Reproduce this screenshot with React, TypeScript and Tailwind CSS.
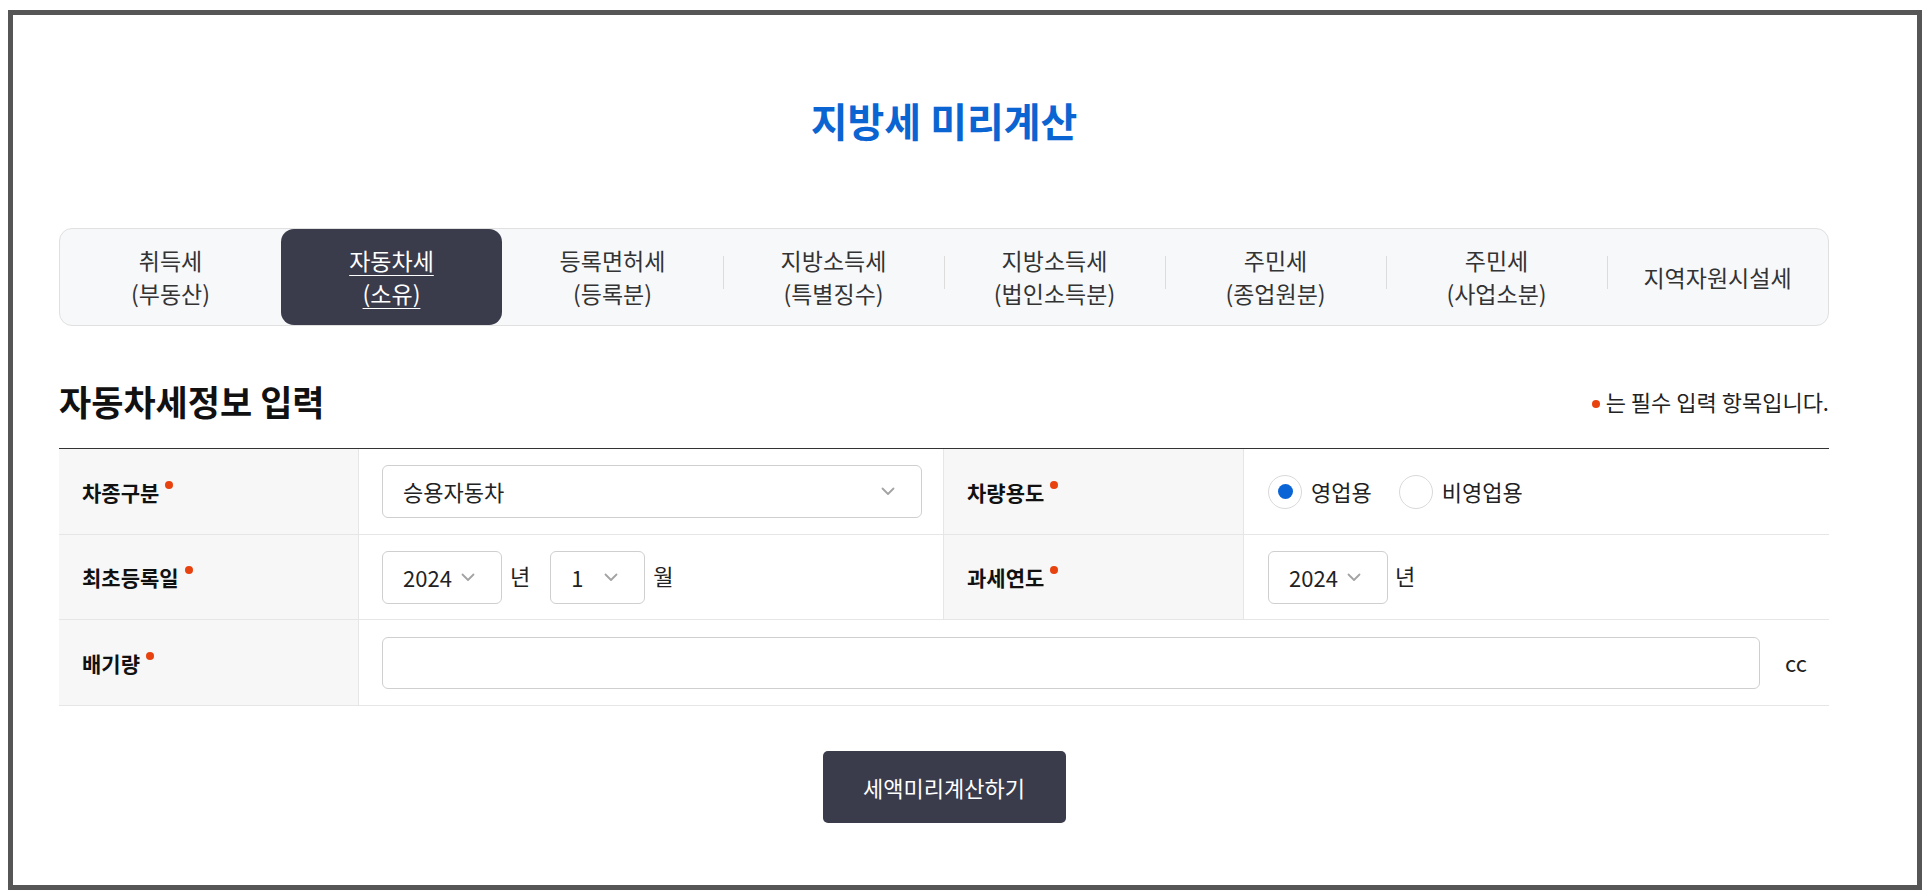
import React from "react";

const TABS: { top: string; bottom?: string }[] = [
  { top: "취득세", bottom: "(부동산)" },
  { top: "자동차세", bottom: "(소유)" },
  { top: "등록면허세", bottom: "(등록분)" },
  { top: "지방소득세", bottom: "(특별징수)" },
  { top: "지방소득세", bottom: "(법인소득분)" },
  { top: "주민세", bottom: "(종업원분)" },
  { top: "주민세", bottom: "(사업소분)" },
  { top: "지역자원시설세" },
];

const ACTIVE = 1;

function Chevron() {
  return (
    <svg width="14" height="9" viewBox="0 0 14 9" fill="none" className="shrink-0">
      <path d="M1.5 1.5L7 7L12.5 1.5" stroke="#a3a3a3" strokeWidth="1.8" strokeLinecap="round" strokeLinejoin="round" />
    </svg>
  );
}

function Required() {
  return <span className="ml-[6px] inline-block h-[8px] w-[8px] self-start mt-[3px] rounded-full bg-[#e8420f]" />;
}

function Label({ children }: { children: React.ReactNode }) {
  return (
    <div className="flex w-[300px] shrink-0 items-center border-r border-[#e6e6e6] bg-[#f7f7f7] pl-[23px]">
      <span className="flex items-start text-[21px] font-bold leading-[28px] text-[#111]">
        {children}
        <Required />
      </span>
    </div>
  );
}

function SelectBox({ value, width }: { value: string; width: string }) {
  return (
    <div
      className={`flex h-[53px] ${width} items-center justify-between rounded-[6px] border border-[#cfcfcf] bg-white pl-[20px] pr-[26px]`}
    >
      <span className="text-[22px] text-[#222]">{value}</span>
      <Chevron />
    </div>
  );
}

function Radio({ label, checked }: { label: string; checked?: boolean }) {
  return (
    <label className="flex items-center gap-[9px]">
      <span className="flex h-[34px] w-[34px] items-center justify-center rounded-full border-[1.5px] border-[#d9d9d9] bg-white">
        {checked && <span className="h-[15px] w-[15px] rounded-full bg-[#0a64d6]" />}
      </span>
      <span className="text-[22px] text-[#222]">{label}</span>
    </label>
  );
}

export default function App() {
  return (
    <div className="min-h-screen bg-white pl-[8px] pt-[10px] font-['Noto_Sans_CJK_KR','Noto_Sans',sans-serif]">
      <div className="h-[880px] w-[1914px] border-[5px] border-[#565656] pl-[46px]">
        <div className="w-[1770px]">
          {/* Title */}
          <h1 className="mt-[75px] text-center text-[40px] font-bold leading-[60px] text-[#0a64d2]">
            지방세 미리계산
          </h1>

          {/* Tabs */}
          <div className="mt-[78px] flex h-[98px] rounded-[13px] border border-[#e0e0e0] bg-[#f7f8fa]">
            {TABS.map((tab, i) => {
              const active = i === ACTIVE;
              const divider = i > 0 && i !== ACTIVE && i - 1 !== ACTIVE;
              return (
                <div
                  key={i}
                  className={`relative flex flex-1 items-center justify-center text-center text-[23px] leading-[33px] ${
                    active ? "rounded-[13px] bg-[#3a3b4b] text-white" : "text-[#333]"
                  }`}
                >
                  {divider && (
                    <span className="absolute left-0 top-[27px] h-[33px] w-px bg-[#dcdcdc]" />
                  )}
                  <span className={active ? "underline underline-offset-[5px] decoration-1" : ""}>
                    {tab.top}
                    {tab.bottom && (
                      <>
                        <br />
                        {tab.bottom}
                      </>
                    )}
                  </span>
                </div>
              );
            })}
          </div>

          {/* Section heading */}
          <div className="mt-[55px] flex h-[40px] items-center justify-between">
            <h2 className="text-[35px] font-bold leading-[40px] text-[#111]">자동차세정보 입력</h2>
            <p className="flex items-center text-[22px] text-[#222]">
              <span className="mr-[6px] mt-[6px] inline-block h-[8px] w-[8px] rounded-full bg-[#e8420f]" />
              는 필수 입력 항목입니다.
            </p>
          </div>

          {/* Form table */}
          <div className="mt-[27px] border-t border-[#333]">
            <div className="flex h-[86px] border-b border-[#e6e6e6]">
              <Label>차종구분</Label>
              <div className="flex w-[585px] shrink-0 items-center border-r border-[#e6e6e6] pl-[23px] pr-[21px]">
                <div className="flex-1">
                  <SelectBox value="승용자동차" width="w-full" />
                </div>
              </div>
              <Label>차량용도</Label>
              <div className="flex flex-1 items-center gap-[27px] pl-[24px]">
                <Radio label="영업용" checked />
                <Radio label="비영업용" />
              </div>
            </div>

            <div className="flex h-[85px] border-b border-[#e6e6e6]">
              <Label>최초등록일</Label>
              <div className="flex w-[585px] shrink-0 items-center border-r border-[#e6e6e6] pl-[23px]">
                <SelectBox value="2024" width="w-[120px]" />
                <span className="ml-[8px] mb-[4px] text-[22px] text-[#222]">년</span>
                <div className="ml-[20px]">
                  <SelectBox value="1" width="w-[95px]" />
                </div>
                <span className="ml-[8px] mb-[4px] text-[22px] text-[#222]">월</span>
              </div>
              <Label>과세연도</Label>
              <div className="flex flex-1 items-center pl-[24px]">
                <SelectBox value="2024" width="w-[120px]" />
                <span className="ml-[7px] mb-[4px] text-[22px] text-[#222]">년</span>
              </div>
            </div>

            <div className="flex h-[86px] border-b border-[#e6e6e6]">
              <Label>배기량</Label>
              <div className="flex flex-1 items-center pl-[23px] pr-[22px]">
                <input
                  type="text"
                  className="h-[52px] flex-1 rounded-[6px] border border-[#cfcfcf] bg-white px-[20px] text-[22px] outline-none"
                />
                <span className="ml-[25px] text-[22px] text-[#222]">cc</span>
              </div>
            </div>
          </div>

          {/* Submit */}
          <div className="mt-[45px] flex justify-center">
            <button className="h-[72px] w-[243px] rounded-[5px] bg-[#3a3b4b] text-[22px] text-white">
              세액미리계산하기
            </button>
          </div>
        </div>
      </div>
    </div>
  );
}
